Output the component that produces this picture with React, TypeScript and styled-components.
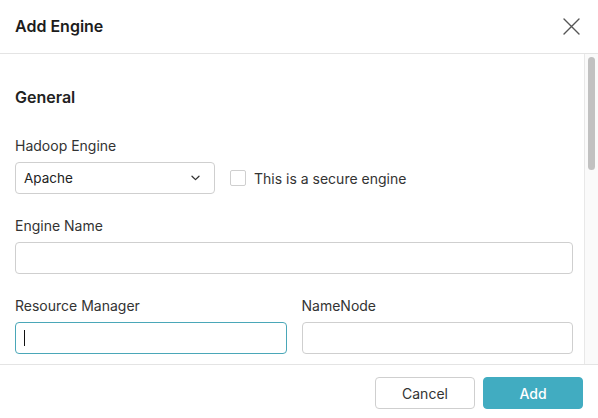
import React from "react";
import styled, { createGlobalStyle } from "styled-components";

const Global = createGlobalStyle`
  html, body { margin: 0; padding: 0; background: #fff; }
  body { font-family: Inter, "Noto Sans", "Liberation Sans", sans-serif; color: #222; }
  * { box-sizing: border-box; }
`;

const Modal = styled.div`
  width: 598px;
  height: 418px;
  display: flex;
  flex-direction: column;
  background: #fff;
  overflow: hidden;
`;

const Header = styled.div`
  height: 54px;
  flex: none;
  display: flex;
  align-items: center;
  justify-content: space-between;
  padding: 0 18px 1px 15px;
  border-bottom: 1px solid #e4e4e4;
`;

const Title = styled.h1`
  margin: 0;
  font-size: 16px;
  font-weight: 600;
  color: #1c1c1c;
`;

const CloseButton = styled.button`
  width: 18px;
  height: 18px;
  padding: 0;
  border: 0;
  background: none;
  display: flex;
  align-items: center;
  justify-content: center;
  color: #555;
  cursor: pointer;
`;

const Body = styled.div`
  flex: 1;
  min-height: 0;
  display: flex;
`;

const Content = styled.div`
  flex: 1;
  min-width: 0;
  overflow: hidden;
  padding: 33px 11px 0 15px;
`;

const ScrollTrack = styled.div`
  width: 14px;
  flex: none;
  background: #fafafa;
  border-left: 1px solid #e8e8e8;
  padding: 3px 3px 0 3px;
`;

const ScrollThumb = styled.div`
  height: 113px;
  border-radius: 4px;
  background: #c1c1c1;
`;

const SectionTitle = styled.h2`
  margin: 0 0 29px;
  font-size: 16px;
  line-height: 20px;
  font-weight: 600;
  color: #222;
`;

const Field = styled.div`
  display: flex;
  flex-direction: column;
  margin-bottom: 22px;
`;

const Label = styled.label`
  font-size: 14px;
  line-height: 20px;
  color: #333;
  margin-bottom: 6px;
`;

const Row = styled.div`
  display: flex;
  align-items: center;
  gap: 15px;
`;

const Columns = styled.div`
  display: grid;
  grid-template-columns: 1fr 1fr;
  column-gap: 15px;
`;

const SelectBox = styled.div`
  width: 200px;
  height: 32px;
  border: 1px solid #cfcfcf;
  border-radius: 4px;
  display: flex;
  align-items: center;
  justify-content: space-between;
  padding: 0 14px 0 8px;
  font-size: 13.5px;
  color: #222;
`;

const CheckRow = styled.label`
  display: flex;
  align-items: center;
  gap: 8px;
  font-size: 14px;
  color: #333;
`;

const CheckBox = styled.span`
  width: 16px;
  height: 16px;
  border: 1px solid #cfcfcf;
  border-radius: 2px;
  background: #fff;
`;

const InputWrap = styled.div`
  position: relative;
`;

const Input = styled.input<{ $focused?: boolean }>`
  display: block;
  width: 100%;
  height: 32px;
  border: 1px solid ${(p) => (p.$focused ? "#4aa7b8" : "#cfcfcf")};
  border-radius: 4px;
  padding: 0 8px;
  font-family: inherit;
  font-size: 13.5px;
  color: #222;
  outline: none;
  caret-color: transparent;
`;

const Caret = styled.span`
  position: absolute;
  left: 9px;
  top: 8px;
  width: 1px;
  height: 16px;
  background: #111;
`;

const Footer = styled.div`
  height: 54px;
  flex: none;
  border-top: 1px solid #e4e4e4;
  display: flex;
  justify-content: flex-end;
  align-items: flex-start;
  gap: 8px;
  padding: 12px 15px 0;
`;

const Button = styled.button<{ $primary?: boolean }>`
  width: 100px;
  height: 32px;
  border-radius: 4px;
  font-family: inherit;
  font-size: 14px;
  font-weight: ${(p) => (p.$primary ? 500 : 400)};
  color: ${(p) => (p.$primary ? "#fff" : "#333")};
  background: ${(p) => (p.$primary ? "#41acc1" : "#fff")};
  border: 1px solid ${(p) => (p.$primary ? "#41acc1" : "#cfcfcf")};
  cursor: pointer;
`;

export default function App() {
  return (
    <>
      <Global />
      <Modal>
        <Header>
          <Title>Add Engine</Title>
          <CloseButton aria-label="Close">
            <svg width="17" height="17" viewBox="0 0 17 17" fill="none" stroke="currentColor" strokeWidth="1.4" strokeLinecap="round">
              <path d="M1 1 L16 16 M16 1 L1 16" />
            </svg>
          </CloseButton>
        </Header>
        <Body>
          <Content>
            <SectionTitle>General</SectionTitle>
            <Field>
              <Label>Hadoop Engine</Label>
              <Row>
                <SelectBox>
                  <span>Apache</span>
                  <svg width="9" height="6" viewBox="0 0 9 6" fill="none" stroke="#333" strokeWidth="1.3" strokeLinecap="round" strokeLinejoin="round">
                    <path d="M1 1.2 L4.5 4.6 L8 1.2" />
                  </svg>
                </SelectBox>
                <CheckRow>
                  <CheckBox />
                  This is a secure engine
                </CheckRow>
              </Row>
            </Field>
            <Field>
              <Label>Engine Name</Label>
              <Input />
            </Field>
            <Columns>
              <Field>
                <Label>Resource Manager</Label>
                <InputWrap>
                  <Input $focused />
                  <Caret />
                </InputWrap>
              </Field>
              <Field>
                <Label>NameNode</Label>
                <Input />
              </Field>
            </Columns>
          </Content>
          <ScrollTrack>
            <ScrollThumb />
          </ScrollTrack>
        </Body>
        <Footer>
          <Button>Cancel</Button>
          <Button $primary>Add</Button>
        </Footer>
      </Modal>
    </>
  );
}
